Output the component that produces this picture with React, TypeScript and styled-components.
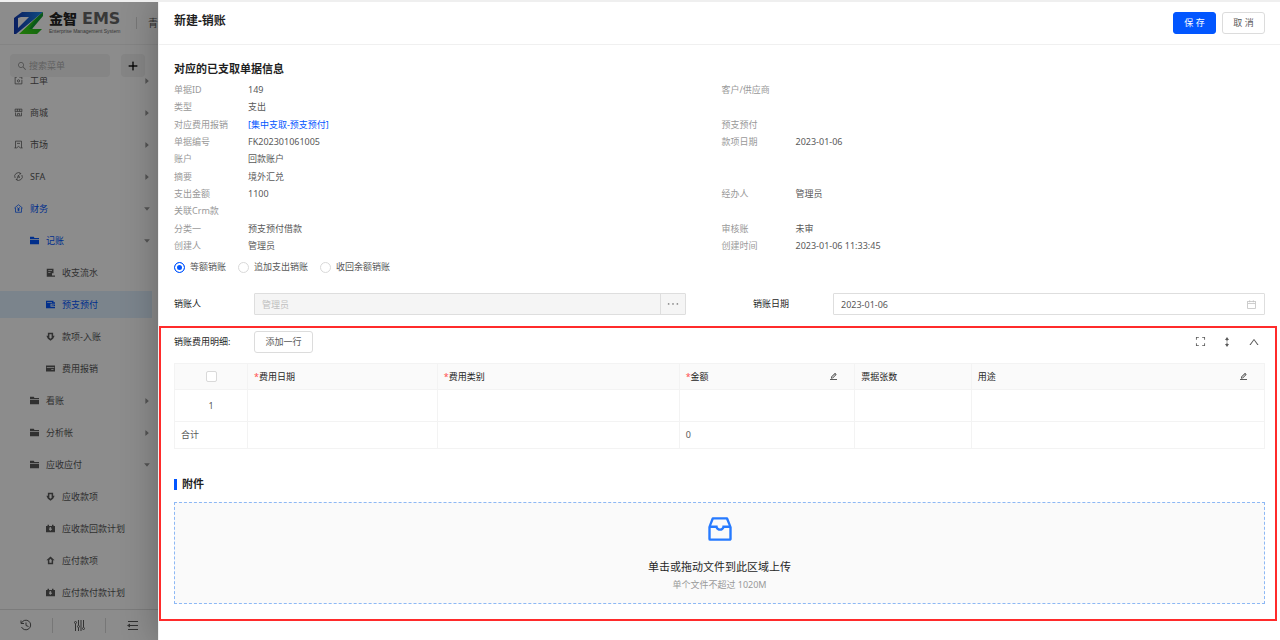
import React from 'react';
import styled, { createGlobalStyle } from 'styled-components';
import {
  AiOutlineInbox,
  AiOutlineExpand,
  AiOutlineUp,
  AiOutlineCalendar,
  AiOutlineEdit,
  AiOutlineEllipsis,
  AiOutlineSearch,
  AiOutlinePlus,
  AiFillCaretRight,
  AiFillCaretDown,
} from 'react-icons/ai';

const BLUE = '#0256ff';

const GlobalStyle = createGlobalStyle`
  *, *::before, *::after { box-sizing: border-box; }
  body {
    margin: 0;
    background: #fff;
    color: #595959;
    font-family: "Noto Sans", "Noto Sans CJK SC", sans-serif;
    font-size: 9px;
    line-height: 16px;
  }
  button, input { font: inherit; color: inherit; }
  h1, h2, p { margin: 0; }
  a { text-decoration: none; color: inherit; }
  svg { display: block; flex: none; }
`;

const Page = styled.div`
  display: flex;
  flex-direction: column;
  min-height: 100vh;
`;

const TopStrip = styled.div`
  height: 2px;
  background: #efefef;
`;

const Columns = styled.div`
  flex: 1;
  display: flex;
`;

/* ---------- sidebar ---------- */

const Sidebar = styled.aside`
  position: relative;
  flex: none;
  width: 158px;
  height: calc(100vh - 2px);
  display: flex;
  flex-direction: column;
  overflow: hidden;
`;

const Mask = styled.div`
  position: absolute;
  inset: 0;
  background: rgba(0, 0, 0, 0.45);
`;

const Brand = styled.div`
  flex: none;
  display: flex;
  align-items: center;
  height: 43px;
  padding-left: 14px;
  border-bottom: 1px solid #f0f0f0;
  white-space: nowrap;
`;

const BrandText = styled.div`
  width: 75px;
  margin-left: 5px;
  color: #262626;
`;

const BrandName = styled.div`
  display: flex;
  align-items: center;
  gap: 5px;
  font-size: 14px;
  font-weight: 900;
  line-height: 16px;
`;

const BrandLatin = styled.span`
  font-family: "DejaVu Sans", sans-serif;
  font-size: 16px;
  font-weight: 700;
  color: #666;
`;

const Tagline = styled.div`
  font-family: "Liberation Sans", sans-serif;
  font-size: 5px;
  line-height: 8px;
  color: #666;
`;

const Company = styled.div`
  margin-left: 13px;
  padding-left: 11px;
  border-left: 1px solid #d9d9d9;
  font-size: 10px;
  line-height: 12px;
`;

const SearchRow = styled.div`
  flex: none;
  display: flex;
  gap: 11px;
  padding: 9px 13px 0 10px;
`;

const SearchBox = styled.label`
  flex: 1;
  min-width: 0;
  display: flex;
  align-items: center;
  gap: 2px;
  height: 23px;
  padding: 0 7px;
  border-radius: 4px;
  background: #f3f3f3;
  color: #8c8c8c;

  input {
    width: 100%;
    min-width: 0;
    padding: 0;
    border: 0;
    outline: 0;
    background: none;
  }
  input::placeholder { color: #b0b0b0; opacity: 1; }
`;

const AddButton = styled.button`
  display: grid;
  place-items: center;
  width: 24px;
  height: 23px;
  padding: 0;
  border: 0;
  border-radius: 4px;
  background: #f3f3f3;
  color: #000;
`;

const Menu = styled.nav`
  flex: 1;
  min-height: 0;
  display: flex;
  flex-direction: column;
  justify-content: flex-end;
  padding-right: 6px;
  overflow: hidden;
`;

const MenuItem = styled.a<{ $level: number; $active?: boolean; $selected?: boolean }>`
  flex: none;
  display: flex;
  align-items: center;
  gap: 7px;
  height: 27px;
  margin: 2px 0 3px;
  padding: 0 1px 0 ${(p) => 14 + p.$level * 16}px;
  background: ${(p) => (p.$selected ? '#e1f1ff' : 'transparent')};
  color: ${(p) => (p.$active ? BLUE : '#595959')};

  span { flex: 1; }
  > svg:last-child { color: #999; }
`;

const SidebarFooter = styled.div`
  flex: none;
  display: flex;
  align-items: center;
  height: 31px;
  border-top: 1px solid #e0e0e0;
`;

const FooterButton = styled.button`
  flex: 1;
  display: grid;
  place-items: center;
  height: 15px;
  padding: 0;
  border: 0;
  border-right: 1px solid #d9d9d9;
  background: none;
  color: #595959;

  &:last-child { border-right: 0; }
`;

/* ---------- drawer ---------- */

const Drawer = styled.main`
  position: relative;
  flex: 1;
  min-width: 0;
  background: #fff;
  border-left: 1px solid #f0f0f0;
  box-shadow: -2px 0 32px rgba(0, 0, 0, 0.25);
  clip-path: inset(0 0 0 -60px);
`;

const DrawerHeader = styled.header`
  display: flex;
  align-items: flex-start;
  gap: 6px;
  height: 43px;
  padding: 10px 15px 0;
  border-bottom: 1px solid #f0f0f0;
`;

const DrawerTitle = styled.h1`
  flex: 1;
  color: #1f1f1f;
  font-size: 12px;
  line-height: 18px;
`;

const Button = styled.button<{ $primary?: boolean; $wide?: boolean }>`
  min-width: ${(p) => (p.$wide ? 59 : 43)}px;
  height: 22px;
  padding: 0 8px;
  border: 1px solid ${(p) => (p.$primary ? BLUE : '#dcdcdc')};
  border-radius: 3px;
  background: ${(p) => (p.$primary ? BLUE : '#fff')};
  color: ${(p) => (p.$primary ? '#fff' : '#595959')};
  line-height: 18px;
`;

const Info = styled.section`
  padding: 16px 15px 11px;
`;

const InfoTitle = styled.h2`
  margin-bottom: 4px;
  color: #1f1f1f;
  font-size: 11px;
  line-height: 16px;
`;

const Details = styled.div`
  display: grid;
  grid-template-columns: 1fr 1fr;
  column-gap: 4px;
  min-height: 173px;
  align-content: space-between;
`;

const Detail = styled.div`
  display: flex;
  height: 17px;
  line-height: 17px;
`;

const DetailLabel = styled.span`
  flex: none;
  width: 74px;
  color: #999;
`;

const DetailLink = styled.a`
  color: ${BLUE};
`;

const RadioGroup = styled.div`
  display: flex;
  gap: 12px;
  margin-top: 7px;
`;

const RadioLabel = styled.label`
  display: flex;
  align-items: center;
  gap: 5px;
  height: 12px;

  input {
    appearance: none;
    width: 11px;
    height: 11px;
    margin: 0;
    border: 1px solid #d9d9d9;
    border-radius: 50%;
    background: #fff;
  }
  input:checked {
    border-color: ${BLUE};
    background: ${BLUE};
    box-shadow: inset 0 0 0 2px #fff;
  }
`;

const FormRow = styled.div`
  display: grid;
  grid-template-columns: 1fr 1fr;
  column-gap: 67px;
  margin-top: 20px;
`;

const Field = styled.div`
  display: flex;
  align-items: center;

  > label { flex: none; width: 80px; color: #262626; }
`;

const Control = styled.div<{ $disabled?: boolean }>`
  flex: 1;
  min-width: 0;
  display: flex;
  align-items: center;
  height: 22px;
  border: 1px solid #dedede;
  border-radius: 1px;
  background: ${(p) => (p.$disabled ? '#f5f5f5' : '#fff')};
  color: #595959;

  input {
    flex: 1;
    min-width: 0;
    height: 20px;
    padding: 0 7px;
    border: 0;
    outline: 0;
    background: none;
  }
  input:disabled { color: #bfbfbf; }
  > svg { margin-right: 7px; color: #bfbfbf; }
`;

const MoreButton = styled.button`
  align-self: stretch;
  display: grid;
  place-items: center;
  width: 25px;
  padding: 0;
  border: 0;
  border-left: 1px solid #dedede;
  background: #f5f5f5;
  color: #8c8c8c;
`;

/* ---------- highlighted block: expense lines and attachments ---------- */

const Highlight = styled.section`
  margin-right: 3px;
  padding: 3px 10px 15px 13px;
  border: 2px solid #ff2b2b;
`;

const Toolbar = styled.div`
  display: flex;
  align-items: center;
  height: 21px;
  margin-bottom: 11px;
`;

const ToolbarLabel = styled.span`
  flex: none;
  width: 80px;
  color: #262626;
`;

const ToolbarIcons = styled.div`
  display: flex;
  gap: 11px;
  margin-left: auto;
  padding-right: 3px;
`;

const IconButton = styled.button`
  display: grid;
  place-items: center;
  width: 16px;
  height: 16px;
  padding: 0;
  border: 0;
  background: none;
  color: #595959;
`;

const Table = styled.table`
  width: 100%;
  table-layout: fixed;
  border-collapse: collapse;
  text-align: left;

  th, td {
    height: 27px;
    padding: 0 6px;
    border: 1px solid #f3f3f3;
    font-weight: 400;
  }
  th { height: 26px; background: #fafafa; color: #262626; }
  tbody td { height: 32px; }
  th:first-child, tbody td:first-child { text-align: center; }
`;

const Col = styled.col<{ $width: number }>`
  width: ${(p) => p.$width}%;
`;

const HeadCell = styled.div`
  display: flex;
  align-items: center;

  svg { margin-left: auto; margin-right: 10px; }
`;

const Required = styled.span`
  color: #ff4d4f;
`;

const Checkbox = styled.input`
  appearance: none;
  display: block;
  width: 11px;
  height: 11px;
  margin: 0 auto;
  border: 1px solid #d9d9d9;
  border-radius: 2px;
  background: #fff;
`;

const AttachTitle = styled.h2`
  display: flex;
  align-items: center;
  gap: 5px;
  margin: 27px 0 10px;
  color: #1f1f1f;
  font-size: 11px;
  line-height: 16px;

  &::before {
    content: "";
    width: 3px;
    height: 11px;
    background: ${BLUE};
  }
`;

const Dropzone = styled.label`
  display: flex;
  flex-direction: column;
  align-items: center;
  padding: 10px 0 11px;
  border: 1px dashed #8db8f5;
  background: #fafafa;
  color: #267aff;

  input { display: none; }
`;

const DropText = styled.p`
  margin-top: 14px;
  color: #262626;
  font-size: 11px;
  line-height: 16px;
`;

const DropHint = styled.p`
  margin-top: 3px;
  color: #999;
  line-height: 14px;
`;

/* ---------- drawings ---------- */

const Logo = () => (
  <svg width="30" height="24" viewBox="0 0 30 24" aria-hidden="true">
    <defs>
      <linearGradient id="lb" x1="0" y1="0" x2="1" y2="0">
        <stop offset="0" stopColor="#1238b0" />
        <stop offset="1" stopColor="#1c8cf0" />
      </linearGradient>
      <linearGradient id="lg" x1="0" y1="1" x2="1" y2="0">
        <stop offset="0" stopColor="#3fe010" />
        <stop offset="1" stopColor="#0f9a2c" />
      </linearGradient>
    </defs>
    <path d="M8 1H29L18 10 2 23H0V7Z M4 7V17L15 6H7Z" fill="url(#lb)" fillRule="evenodd" />
    <path d="M29 1L23 9 18 18H28L23 23H5L21 8Z" fill="url(#lg)" />
    <path d="M29 1V5L18 18H15L25 5Z" fill="#12a032" />
  </svg>
);

type IconName =
  | 'order' | 'shop' | 'market' | 'sfa' | 'finance' | 'folder'
  | 'flow' | 'wallet' | 'down' | 'card' | 'plan' | 'up';

const glyphs: Record<IconName, React.ReactNode> = {
  order: (
    <g fill="none" stroke="currentColor">
      <path d="M4 1.5H1.5v9h9V5M7 1.5h3.5V4" />
      <circle cx="6" cy="6.5" r="1.5" />
    </g>
  ),
  shop: (
    <g fill="none" stroke="currentColor">
      <path d="M1.5 5V1.5h9V5M1.5 4.5h9M2 6v4.5h8V6M4.5 1.5v3M7.5 1.5v3M4.5 10V7.5h3V10" />
    </g>
  ),
  market: (
    <path d="M2 10.500V1.500h8v9M4 4.500h4M0.500 10.500h3L6 8.500l2.500 2h3" fill="none" stroke="currentColor" />
  ),
  sfa: (
    <g fill="none" stroke="currentColor">
      <path d="M1.500 8A4.800 4.800 0 0 1 9 2.200M10.500 4A4.800 4.800 0 0 1 3 9.800M7.500 0.500l1.700 1.700-2 1M4.500 11.500L2.800 9.800l2-1" />
      <path d="M4.500 7.800L6 4.200 7.500 7.800M5 6.800h2" />
    </g>
  ),
  finance: (
    <path d="M0.500 5.500L6 1l5.500 4.500M2 5v6h8V5M4.500 4.500L6 6l1.500-1.500M6 6v3.500M4.500 6.500h3M4.500 8h3" fill="none" stroke="currentColor" />
  ),
  folder: <path d="M0 1h5l1 1.500h6V4H0zM0 5h12v6H0z" fill="currentColor" />,
  flow: (
    <path d="M1 1h9v6H8v3h4v1.500H1zM3 3v1h5V3zM3 5.500v1h3v-1z" fill="currentColor" fillRule="evenodd" />
  ),
  wallet: (
    <path d="M0 1h10v2h2v8H0zM1.500 2.500v1H8v-1zM6 5v4h6V8H7.500V6H12V5zM8.500 6.500v1H10v-1z" fill="currentColor" fillRule="evenodd" />
  ),
  down: (
    <path d="M2.500 1h7v4H11.500L9.500 9 6 11.500 2.500 9 0.500 5h2zM4.500 3v4H4l2 2 2-2h-0.500V3z" fill="currentColor" fillRule="evenodd" />
  ),
  card: (
    <path d="M0 2h12v8H0zM1 4v1h10V4zM7 7v1h3V7z" fill="currentColor" fillRule="evenodd" />
  ),
  plan: (
    <path d="M0 2.500h2V1h2v1.500h4V1h2v1.500h2V11H0zM5.500 4L3.500 6H5v1H4v1h1v1h1.500V8H8V7H6.500V6H8L6 4z" fill="currentColor" fillRule="evenodd" />
  ),
  up: (
    <path d="M6 0.500l5.500 5H9.500V11h-7V5.500h-2zM6 3.500l-2 2.500h0.500v3h3V6H8z" fill="currentColor" fillRule="evenodd" />
  ),
};

const MenuIcon = ({ name }: { name: IconName }) => (
  <svg width="9" height="9" viewBox="0 0 12 12" aria-hidden="true">{glyphs[name]}</svg>
);

const HistoryIcon = () => (
  <svg width="12" height="12" viewBox="0 0 12 12" fill="none" stroke="currentColor" aria-hidden="true">
    <path d="M1.500 4A4.800 4.800 0 1 1 1.500 8M1 1.500V4.500H4M6 3.500V6.500L8.500 7.500" />
  </svg>
);

const SlidersIcon = () => (
  <svg width="11" height="11" viewBox="0 0 11 11" fill="none" stroke="currentColor" aria-hidden="true">
    <path d="M1.500 4v7M4.500 0v5M4.500 8v3M7 0v11M9.500 0v7" />
    <circle cx="1.500" cy="2.500" r="1" />
    <circle cx="4.500" cy="6.500" r="1" />
    <circle cx="9.500" cy="8.500" r="1" />
  </svg>
);

const FoldIcon = () => (
  <svg width="11" height="11" viewBox="0 0 11 11" fill="none" stroke="currentColor" aria-hidden="true">
    <path d="M1 1.500h10M5 5.500h6M1 9.500h10" />
    <path d="M0 5.500L3 3.500v4z" fill="currentColor" stroke="none" />
    <path d="M2 5.500h3" />
  </svg>
);

const RowHeightIcon = () => (
  <svg width="10" height="10" viewBox="0 0 10 10" fill="currentColor" aria-hidden="true">
    <path d="M5 0l2 3H3zM5 10l2-3H3zM4.500 3h1v1.500h-1zM4.500 5.500h1V7h-1z" />
  </svg>
);

/* ---------- data ---------- */

interface Entry {
  label: string;
  icon: IconName;
  level: number;
  caret?: 'right' | 'down';
  active?: boolean;
  selected?: boolean;
}

const entries: Entry[] = [
  { label: '工单', icon: 'order', level: 0, caret: 'right' },
  { label: '商城', icon: 'shop', level: 0, caret: 'right' },
  { label: '市场', icon: 'market', level: 0, caret: 'right' },
  { label: 'SFA', icon: 'sfa', level: 0, caret: 'right' },
  { label: '财务', icon: 'finance', level: 0, caret: 'down', active: true },
  { label: '记账', icon: 'folder', level: 1, caret: 'down', active: true },
  { label: '收支流水', icon: 'flow', level: 2 },
  { label: '预支预付', icon: 'wallet', level: 2, active: true, selected: true },
  { label: '款项-入账', icon: 'down', level: 2 },
  { label: '费用报销', icon: 'card', level: 2 },
  { label: '看账', icon: 'folder', level: 1, caret: 'right' },
  { label: '分析帐', icon: 'folder', level: 1, caret: 'right' },
  { label: '应收应付', icon: 'folder', level: 1, caret: 'down' },
  { label: '应收款项', icon: 'down', level: 2 },
  { label: '应收款回款计划', icon: 'plan', level: 2 },
  { label: '应付款项', icon: 'up', level: 2 },
  { label: '应付款付款计划', icon: 'plan', level: 2 },
];

const details: [string, string][] = [
  ['单据ID', '149'], ['客户/供应商', ''],
  ['类型', '支出'], ['', ''],
  ['对应费用报销', '[集中支取-预支预付]'], ['预支预付', ''],
  ['单据编号', 'FK202301061005'], ['款项日期', '2023-01-06'],
  ['账户', '回款账户'], ['', ''],
  ['摘要', '境外汇兑'], ['', ''],
  ['支出金额', '1100'], ['经办人', '管理员'],
  ['关联Crm款', ''], ['', ''],
  ['分类一', '预支预付借款'], ['审核账', '未审'],
  ['创建人', '管理员'], ['创建时间', '2023-01-06 11:33:45'],
];

const columns = [
  { title: '费用日期', width: 17.4, required: true },
  { title: '费用类别', width: 22.2, required: true },
  { title: '金额', width: 16.1, required: true, editable: true },
  { title: '票据张数', width: 10.7 },
  { title: '用途', width: 26.9, editable: true },
];

export default function App() {
  return (
    <>
      <GlobalStyle />
      <Page>
        <TopStrip />
        <Columns>
          <Sidebar>
            <Brand>
              <Logo />
              <BrandText>
                <BrandName>金智<BrandLatin>EMS</BrandLatin></BrandName>
                <Tagline>Enterprise Management System</Tagline>
              </BrandText>
              <Company>青</Company>
            </Brand>
            <SearchRow>
              <SearchBox>
                <AiOutlineSearch size={10} />
                <input type="text" placeholder="搜索菜单" aria-label="搜索菜单" />
              </SearchBox>
              <AddButton type="button" aria-label="添加"><AiOutlinePlus size={12} strokeWidth={30} /></AddButton>
            </SearchRow>
            <Menu>
              {entries.map((e) => (
                <MenuItem key={e.label} href="#" $level={e.level} $active={e.active} $selected={e.selected}>
                  <MenuIcon name={e.icon} />
                  <span>{e.label}</span>
                  {e.caret === 'right' && <AiFillCaretRight size={8} />}
                  {e.caret === 'down' && <AiFillCaretDown size={8} />}
                </MenuItem>
              ))}
            </Menu>
            <SidebarFooter>
              <FooterButton type="button" aria-label="历史"><HistoryIcon /></FooterButton>
              <FooterButton type="button" aria-label="设置"><SlidersIcon /></FooterButton>
              <FooterButton type="button" aria-label="收起"><FoldIcon /></FooterButton>
            </SidebarFooter>
            <Mask />
          </Sidebar>

          <Drawer>
            <DrawerHeader>
              <DrawerTitle>新建-销账</DrawerTitle>
              <Button type="button" $primary>保 存</Button>
              <Button type="button">取 消</Button>
            </DrawerHeader>

            <Info>
              <InfoTitle>对应的已支取单据信息</InfoTitle>
              <Details>
                {details.map(([label, value], i) => (
                  <Detail key={i}>
                    <DetailLabel>{label}</DetailLabel>
                    {value.startsWith('[') ? <DetailLink href="#">{value}</DetailLink> : <span>{value}</span>}
                  </Detail>
                ))}
              </Details>
              <RadioGroup>
                {['等额销账', '追加支出销账', '收回余额销账'].map((label, i) => (
                  <RadioLabel key={label}>
                    <input type="radio" name="mode" defaultChecked={i === 0} />
                    {label}
                  </RadioLabel>
                ))}
              </RadioGroup>
              <FormRow>
                <Field>
                  <label htmlFor="person">销账人</label>
                  <Control $disabled>
                    <input id="person" type="text" defaultValue="管理员" disabled />
                    <MoreButton type="button" aria-label="选择"><AiOutlineEllipsis size={16} /></MoreButton>
                  </Control>
                </Field>
                <Field>
                  <label htmlFor="date">销账日期</label>
                  <Control>
                    <input id="date" type="text" defaultValue="2023-01-06" />
                    <AiOutlineCalendar size={11} />
                  </Control>
                </Field>
              </FormRow>
            </Info>

            <Highlight>
              <Toolbar>
                <ToolbarLabel>销账费用明细:</ToolbarLabel>
                <Button type="button" $wide>添加一行</Button>
                <ToolbarIcons>
                  <IconButton type="button" aria-label="全屏"><AiOutlineExpand size={11} /></IconButton>
                  <IconButton type="button" aria-label="行高"><RowHeightIcon /></IconButton>
                  <IconButton type="button" aria-label="折叠"><AiOutlineUp size={12} /></IconButton>
                </ToolbarIcons>
              </Toolbar>
              <Table>
                <colgroup>
                  <Col $width={6.7} />
                  {columns.map((c) => <Col key={c.title} $width={c.width} />)}
                </colgroup>
                <thead>
                  <tr>
                    <th><Checkbox type="checkbox" aria-label="全选" /></th>
                    {columns.map((c) => (
                      <th key={c.title}>
                        <HeadCell>
                          {c.required && <Required>*</Required>}
                          {c.title}
                          {c.editable && <AiOutlineEdit size={9} />}
                        </HeadCell>
                      </th>
                    ))}
                  </tr>
                </thead>
                <tbody>
                  <tr><td>1</td><td /><td /><td /><td /><td /></tr>
                </tbody>
                <tfoot>
                  <tr><td>合计</td><td /><td /><td>0</td><td /><td /></tr>
                </tfoot>
              </Table>
              <AttachTitle>附件</AttachTitle>
              <Dropzone>
                <input type="file" />
                <AiOutlineInbox size={32} />
                <DropText>单击或拖动文件到此区域上传</DropText>
                <DropHint>单个文件不超过 1020M</DropHint>
              </Dropzone>
            </Highlight>
          </Drawer>
        </Columns>
      </Page>
    </>
  );
}
